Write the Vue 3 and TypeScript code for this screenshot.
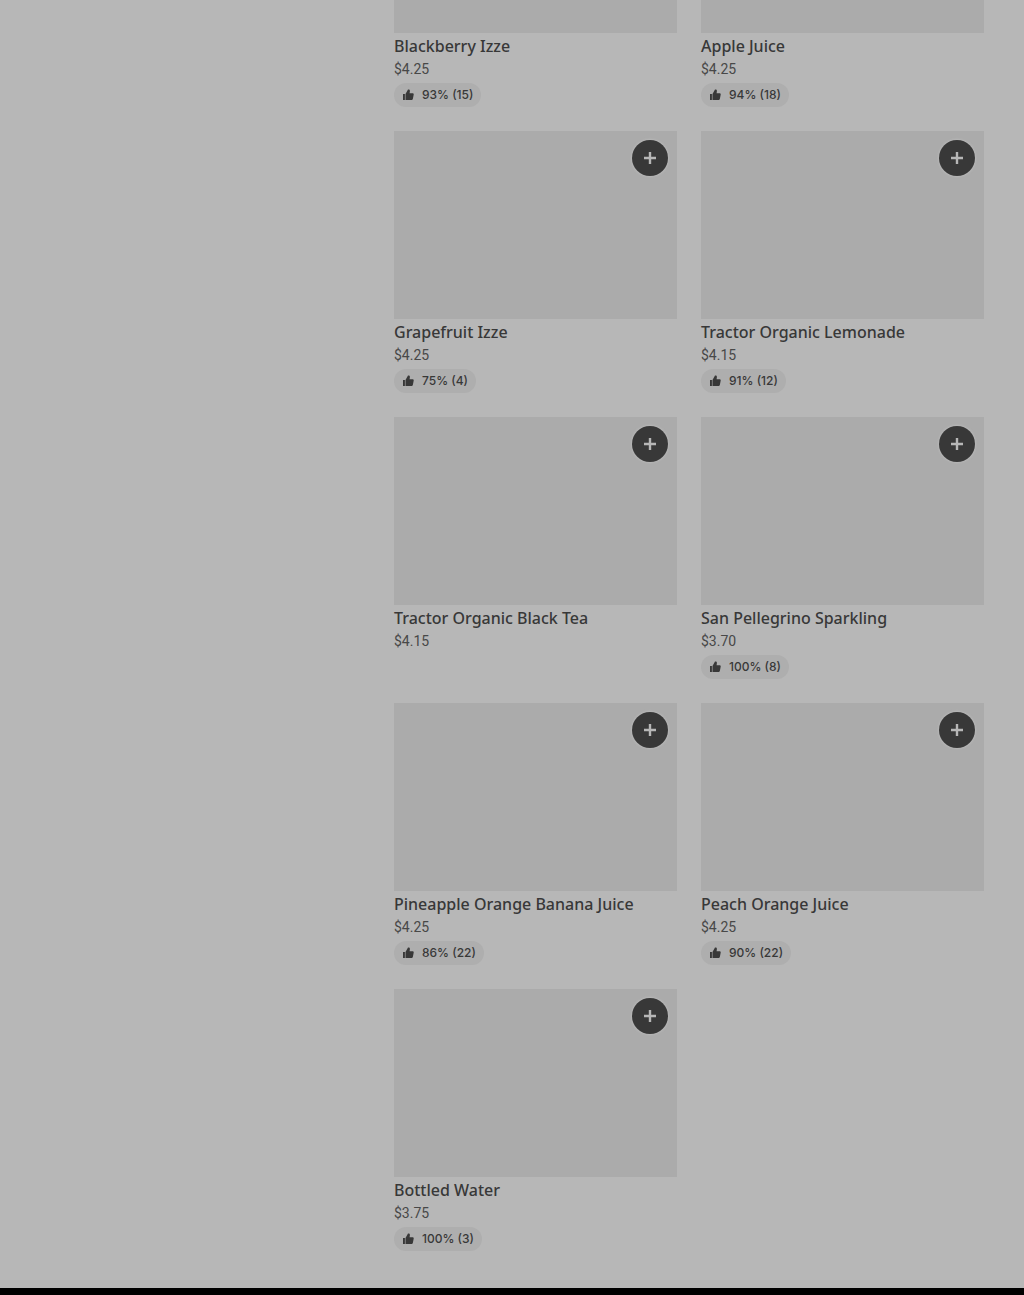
<script setup lang="ts">
interface Item {
  name: string
  price: string
  rating?: string
  continued?: boolean
}

const items: Item[] = [
  { name: 'Blackberry Izze', price: '$4.25', rating: '93% (15)', continued: true },
  { name: 'Apple Juice', price: '$4.25', rating: '94% (18)', continued: true },
  { name: 'Grapefruit Izze', price: '$4.25', rating: '75% (4)' },
  { name: 'Tractor Organic Lemonade', price: '$4.15', rating: '91% (12)' },
  { name: 'Tractor Organic Black Tea', price: '$4.15' },
  { name: 'San Pellegrino Sparkling', price: '$3.70', rating: '100% (8)' },
  { name: 'Pineapple Orange Banana Juice', price: '$4.25', rating: '86% (22)' },
  { name: 'Peach Orange Juice', price: '$4.25', rating: '90% (22)' },
  { name: 'Bottled Water', price: '$3.75', rating: '100% (3)' },
]
</script>

<template>
  <main class="page">
    <ul class="menu">
      <li v-for="item in items" :key="item.name" class="item">
        <div class="photo" :class="{ 'photo-continued': item.continued }">
          <button v-if="!item.continued" class="add" type="button" :aria-label="`Add ${item.name}`">
            <svg width="14" height="14" viewBox="0 0 14 14" aria-hidden="true">
              <path d="M7 1v12M1 7h12" fill="none" stroke="currentColor" stroke-width="2.4" />
            </svg>
          </button>
        </div>
        <h3 class="name">{{ item.name }}</h3>
        <p class="price">{{ item.price }}</p>
        <p v-if="item.rating" class="rating">
          <svg width="12" height="12" viewBox="0 0 12 12" aria-hidden="true">
            <path
              d="M1 5h1.900v6H1zM3.500 5 6 .4h.6c.9 0 1.400.6 1.300 1.500L7.600 4.200h2.900c.9 0 1.400.6 1.200 1.400l-.8 4.100c-.2.900-.7 1.300-1.600 1.300H3.500z"
              fill="currentColor"
            />
          </svg>
          <span>{{ item.rating }}</span>
        </p>
      </li>
    </ul>
  </main>
</template>

<style>
body {
  margin: 0;
  background: #000;
}
</style>

<style scoped>
.page {
  padding: 0 40px 37px 394px;
  background: #b7b7b7;
  color: #383838;
  font-family: "Noto Sans", sans-serif;
}

.menu {
  display: grid;
  grid-template-columns: repeat(2, minmax(0, 1fr));
  gap: 24px;
  margin: 0;
  padding: 0;
  list-style: none;
}

.photo {
  display: flex;
  justify-content: flex-end;
  align-items: flex-start;
  box-sizing: border-box;
  aspect-ratio: 283 / 188;
  padding: 9px;
  background: #ababab;
}

.photo-continued {
  aspect-ratio: auto;
  height: 33px;
}

.add {
  display: flex;
  align-items: center;
  justify-content: center;
  width: 36px;
  height: 36px;
  padding: 0;
  border: 0;
  border-radius: 50%;
  background: #383838;
  color: #b7b7b7;
  box-shadow: 0 0 2px 1px #b7b7b7;
}

.name {
  margin: 1px 0;
  font-size: 16px;
  line-height: 24px;
  font-weight: 500;
}

.price {
  margin: 0;
  font-family: Roboto, sans-serif;
  font-size: 14px;
  line-height: 20px;
  color: #484848;
}

.rating {
  display: flex;
  align-items: center;
  gap: 8px;
  width: fit-content;
  margin: 4px 0 0;
  padding: 0 8px;
  border-radius: 12px;
  background: #aeaeae;
  font-family: Inter, sans-serif;
  font-size: 12px;
  line-height: 24px;
  font-weight: 500;
}
</style>
